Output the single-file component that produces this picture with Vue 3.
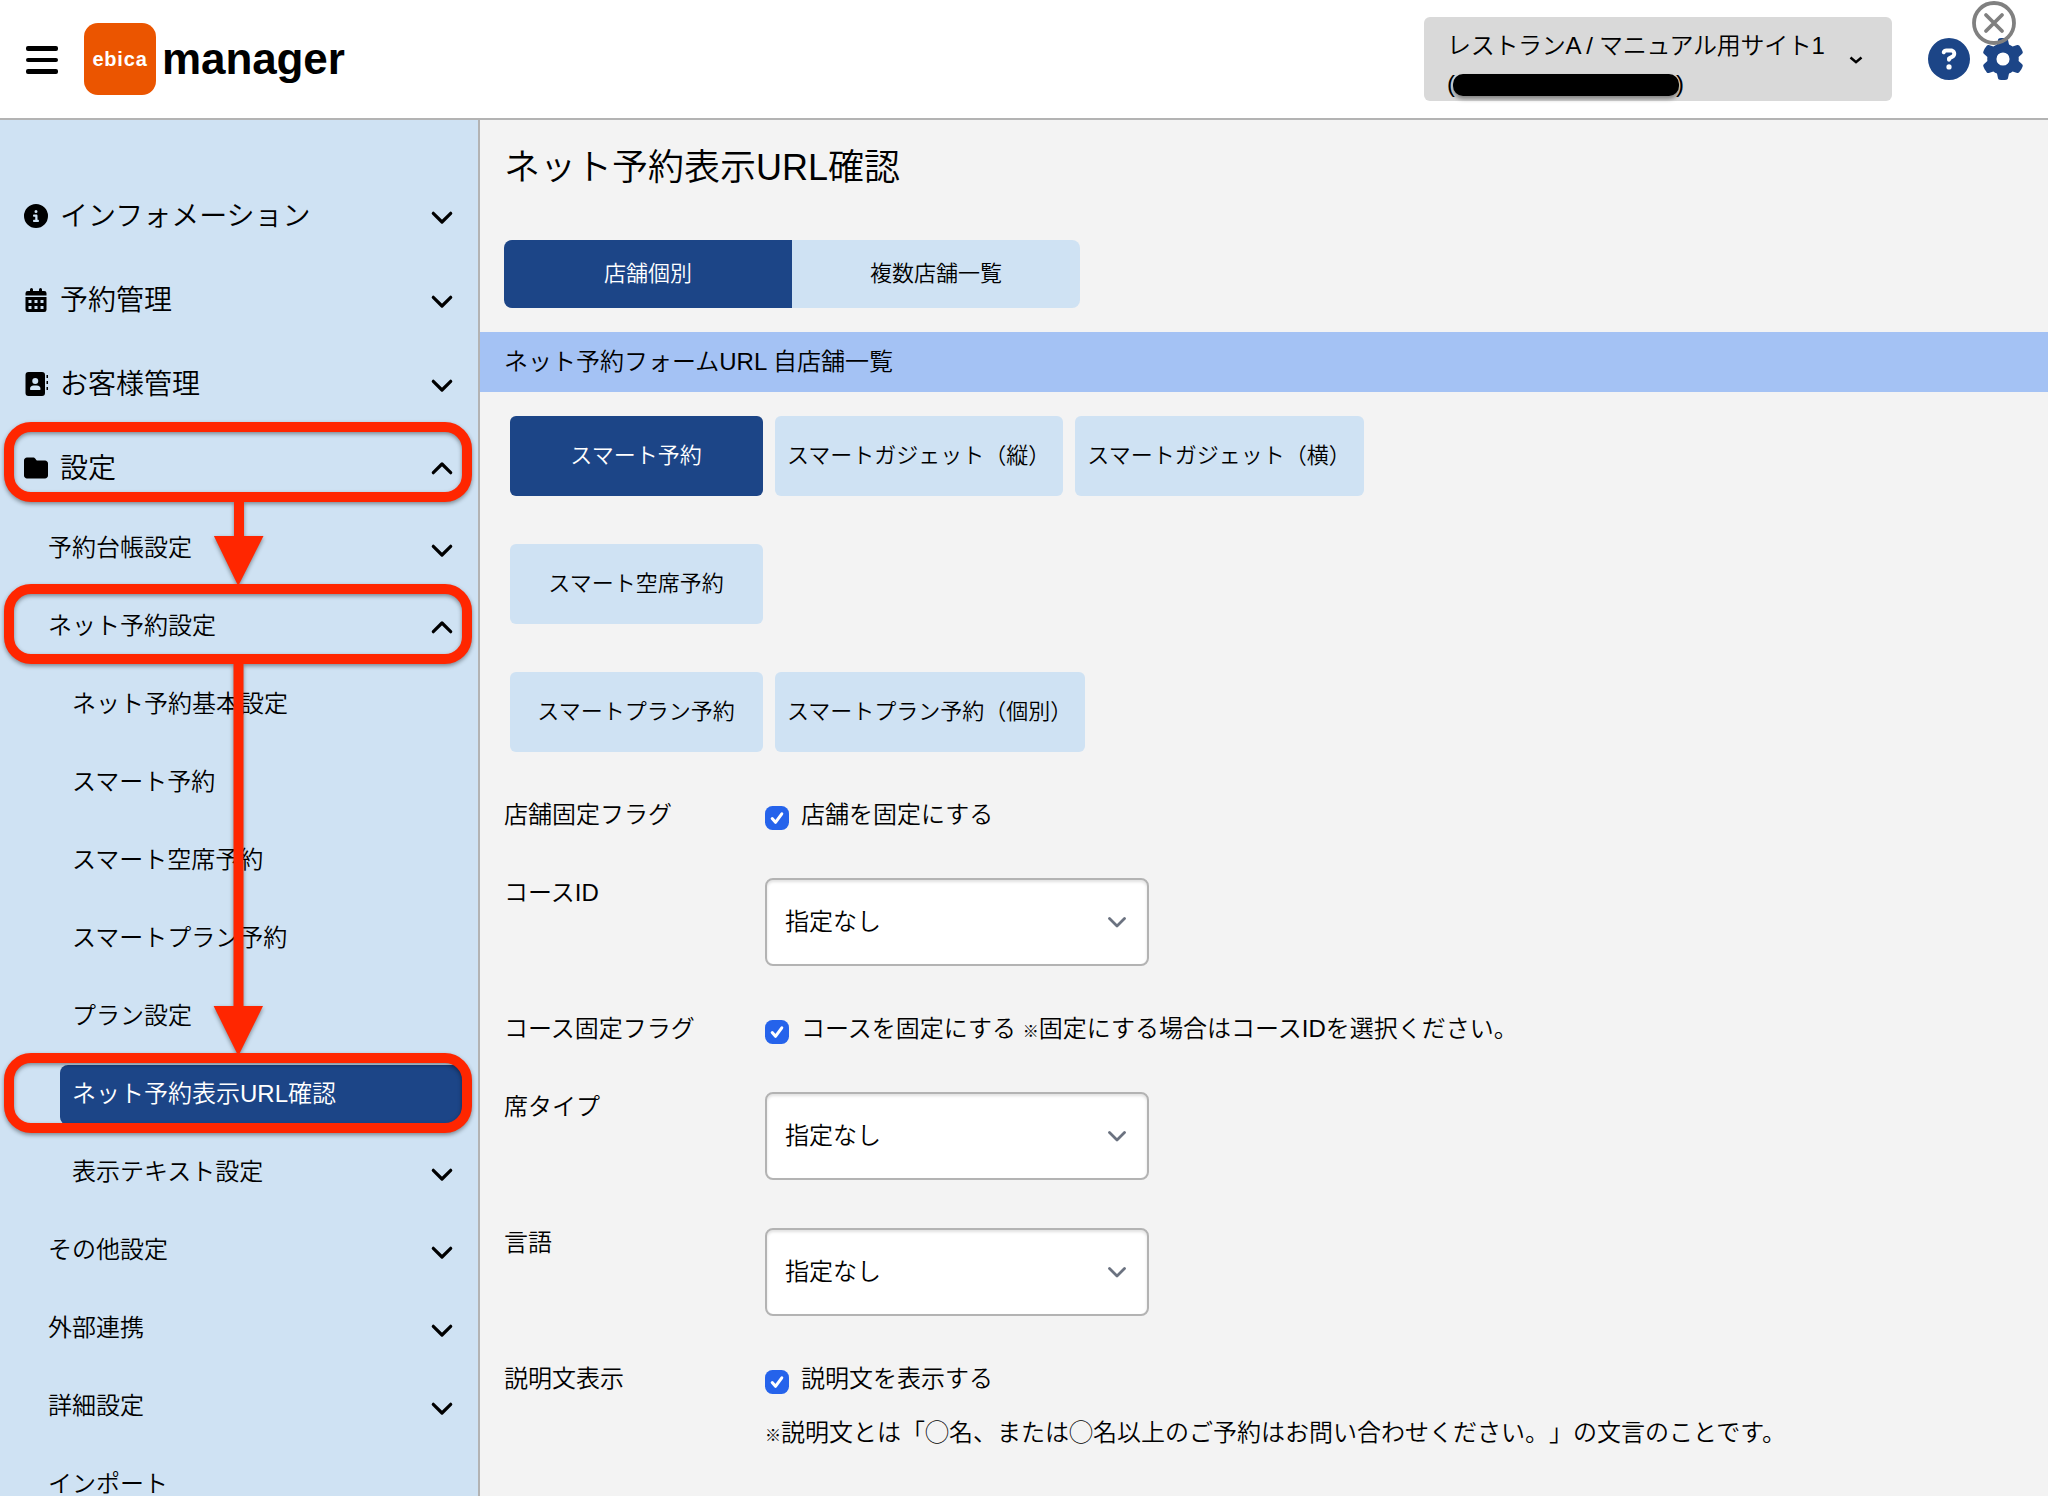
<template>
  <div class="page">
    <header class="header">
      <button
        class="icon-button menu-toggle"
        aria-label="メニュー"
      >
        <span />
        <span />
        <span />
      </button>
      <div class="logo">ebica</div>
      <p class="brand">manager</p>

      <div class="site">
        <div class="site-name">
          <p>レストランA / マニュアル用サイト1</p>
          <p class="site-code">(<span class="site-mask" />)</p>
        </div>
        <svg
          class="site-arrow"
          viewBox="0 0 14 8"
        >
          <path d="M1.5 1.5 7 6.2l5.500-4.700" />
        </svg>
      </div>

      <svg
        class="header-icon"
        viewBox="0 0 512 512"
      >
        <path :d="icons.question" />
      </svg>
      <div class="settings">
        <svg
          class="header-icon"
          viewBox="0 0 512 512"
        >
          <path :d="icons.gear" />
        </svg>
        <svg
          class="close"
          viewBox="0 0 44 44"
        >
          <circle
            cx="22"
            cy="22"
            r="20"
          />
          <path d="M14 14 30 30M30 14 14 30" />
        </svg>
      </div>
    </header>

    <div class="body">
      <nav class="sidebar">
        <ul class="nav-list">
          <li
            v-for="item in menu"
            :key="item.label"
            class="nav-item"
            :class="[`level-${item.level}`, { active: item.active }]"
          >
            <svg
              v-if="item.icon"
              class="nav-icon"
              viewBox="0 0 512 512"
            >
              <path
                fill-rule="evenodd"
                :d="icons[item.icon]"
              />
            </svg>
            <p>{{ item.label }}</p>
            <svg
              v-if="item.arrow"
              class="nav-arrow"
              :class="{ opened: item.arrow === 'up' }"
              viewBox="0 0 22 14"
            >
              <path d="M2.300 2.300 11 11l8.700-8.700" />
            </svg>
          </li>
        </ul>

        <!-- Route through the menu: frames and arrows above the items -->
        <svg
          class="guide"
          viewBox="0 0 478 1376"
        >
          <rect
            v-for="y in [307, 469, 938]"
            :key="y"
            x="9"
            :y="y"
            width="458"
            height="70"
            rx="22"
          />
          <path
            class="guide-arrow"
            d="M234 382h10v34h19.500l-25.300 50-24.300-50h20.100z"
          />
          <path
            class="guide-arrow"
            d="M233.500 542h10v344h19.500l-24.700 50-24.700-50h19.900z"
          />
        </svg>
      </nav>

      <main class="content">
        <h1>ネット予約表示URL確認</h1>

        <div class="tabs">
          <button
            v-for="tab, idx in tabs"
            :key="tab"
            class="tab"
            :class="{ active: idx === activeTab }"
            @click="activeTab = idx"
          >
            {{ tab }}
          </button>
        </div>

        <h2>ネット予約フォームURL 自店舗一覧</h2>

        <div class="types">
          <div
            v-for="row, idx in types"
            :key="idx"
            class="types-row"
          >
            <button
              v-for="type in row"
              :key="type"
              class="type"
              :class="{ active: type === activeType }"
              @click="activeType = type"
            >
              {{ type }}
            </button>
          </div>
        </div>

        <dl class="form">
          <template
            v-for="field in fields"
            :key="field.label"
          >
            <dt>{{ field.label }}</dt>
            <dd>
              <div
                v-if="field.check"
                class="check"
              >
                <svg viewBox="0 0 16 16">
                  <rect
                    width="16"
                    height="16"
                    rx="5"
                  />
                  <path d="M4.800 8.400 7 10.900l4.200-5.700" />
                </svg>
                <p>
                  {{ field.check }}
                  <span
                    v-if="field.hint"
                    class="mark"
                  >※</span>{{ field.hint }}
                </p>
              </div>
              <div
                v-else
                class="select"
              >
                <p>指定なし</p>
                <svg viewBox="0 0 18 11">
                  <path d="M1.500 1.500 9 9l7.500-7.500" />
                </svg>
              </div>
              <p
                v-if="field.note"
                class="note"
              >
                <span class="mark">※</span>{{ field.note }}
              </p>
            </dd>
          </template>
        </dl>
      </main>
    </div>
  </div>
</template>

<script setup>
  import { ref } from 'vue';

  const activeTab = ref(0);
  const activeType = ref('スマート予約');

  const tabs = ['店舗個別', '複数店舗一覧'];

  const types = [
    ['スマート予約', 'スマートガジェット（縦）', 'スマートガジェット（横）'],
    ['スマート空席予約'],
    ['スマートプラン予約', 'スマートプラン予約（個別）']
  ];

  const menu = [
    { level: 1, label: 'インフォメーション', icon: 'info', arrow: 'down' },
    { level: 1, label: '予約管理', icon: 'calendar', arrow: 'down' },
    { level: 1, label: 'お客様管理', icon: 'contacts', arrow: 'down' },
    { level: 1, label: '設定', icon: 'folder', arrow: 'up' },
    { level: 2, label: '予約台帳設定', arrow: 'down' },
    { level: 2, label: 'ネット予約設定', arrow: 'up' },
    { level: 3, label: 'ネット予約基本設定' },
    { level: 3, label: 'スマート予約' },
    { level: 3, label: 'スマート空席予約' },
    { level: 3, label: 'スマートプラン予約' },
    { level: 3, label: 'プラン設定' },
    { level: 3, label: 'ネット予約表示URL確認', active: true },
    { level: 3, label: '表示テキスト設定', arrow: 'down' },
    { level: 2, label: 'その他設定', arrow: 'down' },
    { level: 2, label: '外部連携', arrow: 'down' },
    { level: 2, label: '詳細設定', arrow: 'down' },
    { level: 2, label: 'インポート' }
  ];

  const fields = [
    { label: '店舗固定フラグ', check: '店舗を固定にする' },
    { label: 'コースID' },
    {
      label: 'コース固定フラグ',
      check: 'コースを固定にする',
      hint: '固定にする場合はコースIDを選択ください。'
    },
    { label: '席タイプ' },
    { label: '言語' },
    {
      label: '説明文表示',
      check: '説明文を表示する',
      note: '説明文とは「◯名、または◯名以上のご予約はお問い合わせください。」の文言のことです。'
    }
  ];

  const icons = {
    question: 'M256 512A256 256 0 1 0 256 0a256 256 0 1 0 0 512zM169.800 165.300c7.900-22.300 29.100-37.300 52.800-37.300h58.300c34.900 0 63.100 28.300 63.100 63.100c0 22.600-12.100 43.500-31.700 54.800L280 264.400c-.2 13-10.900 23.600-24 23.600c-13.300 0-24-10.700-24-24V250.500c0-8.600 4.600-16.500 12.100-20.800l44.300-25.400c4.700-2.700 7.600-7.700 7.600-13.100c0-8.400-6.800-15.100-15.100-15.100H222.600c-3.400 0-6.400 2.100-7.500 5.300l-.4 1.200c-4.400 12.500-18.200 19-30.600 14.600s-19-18.200-14.600-30.600l.4-1.200zM224 352a32 32 0 1 1 64 0 32 32 0 1 1 -64 0z',
    gear: 'M495.900 166.600c3.200 8.700 .5 18.400-6.400 24.600l-43.300 39.400c1.100 8.300 1.700 16.800 1.700 25.400s-.6 17.100-1.700 25.400l43.300 39.400c6.900 6.200 9.600 15.900 6.400 24.600c-4.400 11.900-9.700 23.300-15.800 34.300l-4.700 8.100c-6.600 11-14 21.400-22.100 31.200c-5.900 7.200-15.700 9.600-24.500 6.800l-55.700-17.700c-13.400 10.300-28.200 18.900-44 25.400l-12.500 57.100c-2 9.100-9 16.300-18.200 17.800c-13.800 2.300-28 3.500-42.500 3.500s-28.700-1.200-42.500-3.500c-9.200-1.500-16.200-8.700-18.200-17.800l-12.500-57.100c-15.800-6.500-30.600-15.100-44-25.400L83.100 425.900c-8.800 2.800-18.600 .3-24.500-6.800c-8.100-9.800-15.500-20.200-22.100-31.200l-4.700-8.100c-6.100-11-11.400-22.400-15.800-34.300c-3.200-8.700-.5-18.400 6.400-24.600l43.300-39.400C64.600 273.100 64 264.600 64 256s.6-17.100 1.700-25.400L22.400 191.200c-6.900-6.200-9.600-15.900-6.400-24.600c4.400-11.900 9.700-23.300 15.800-34.300l4.700-8.100c6.600-11 14-21.400 22.100-31.200c5.900-7.200 15.700-9.600 24.500-6.800l55.700 17.700c13.400-10.300 28.200-18.900 44-25.400l12.500-57.100c2-9.100 9-16.300 18.200-17.800C227.300 1.200 241.500 0 256 0s28.700 1.200 42.500 3.500c9.200 1.500 16.200 8.700 18.200 17.800l12.500 57.100c15.800 6.500 30.600 15.100 44 25.400l55.700-17.700c8.800-2.800 18.600-.3 24.500 6.800c8.100 9.800 15.500 20.200 22.100 31.200l4.700 8.100c6.100 11 11.400 22.400 15.800 34.300zM256 336a80 80 0 1 0 0-160 80 80 0 1 0 0 160z',
    info: 'M256 512A256 256 0 1 0 256 0a256 256 0 1 0 0 512zM216 336h24V272H216c-13.300 0-24-10.700-24-24s10.700-24 24-24h48c13.300 0 24 10.700 24 24v88h8c13.300 0 24 10.700 24 24s-10.700 24-24 24H216c-13.300 0-24-10.700-24-24s10.700-24 24-24zm40-208a32 32 0 1 1 0 64 32 32 0 1 1 0-64z',
    calendar: 'M160 0a32 32 0 0 1 32 32v32h128V32a32 32 0 0 1 64 0v32h48a48 48 0 0 1 48 48v48H32v-48a48 48 0 0 1 48-48h48V32a32 32 0 0 1 32-32zM32 192h448v272a48 48 0 0 1-48 48H80a48 48 0 0 1-48-48zM96 256v64h64v-64zM224 256v64h64v-64zM352 256v64h64v-64zM96 384v64h64v-64zM224 384v64h64v-64zM352 384v64h64v-64z',
    contacts: 'M96 0h288a64 64 0 0 1 64 64v384a64 64 0 0 1-64 64H96a64 64 0 0 1-64-64V64A64 64 0 0 1 96 0zM240 256a64 64 0 1 0 0-128 64 64 0 0 0 0 128zM208 288a80 80 0 0 0-80 80a16 16 0 0 0 16 16h192a16 16 0 0 0 16-16a80 80 0 0 0-80-80zM480 64h32v64h-32zM480 192h32v64h-32zM480 320h32v64h-32z',
    folder: 'M64 480H448c35.300 0 64-28.700 64-64V160c0-35.300-28.700-64-64-64H288c-10.100 0-19.600-4.700-25.600-12.800L243.200 57.600C231.100 41.500 212.100 32 192 32H64C28.700 32 0 60.700 0 96V416c0 35.300 28.700 64 64 64z'
  };
</script>

<style>
body {
  overflow: hidden;
}
</style>

<style scoped>
.page {
  --navy: #1c4587;
  --pale: #cfe2f3;
  --line: #b3b3b3;

  display: flex;
  flex-direction: column;
  height: 1496px;
  overflow: hidden;
  background-color: #f3f3f3;
  color: #000;
  font-family: "Liberation Sans", "Noto Sans CJK JP", sans-serif;
  font-size: 24px;
  font-weight: 350;
  line-height: 30px;
  text-spacing-trim: space-all;
  white-space: nowrap;
}

p, h1, h2, ul, dl, dd {
  margin: 0;
  padding: 0;
  font-weight: inherit;
}

button {
  padding: 0;
  border: 0;
  background: none;
  color: inherit;
  font: inherit;
}

.header {
  display: flex;
  flex: none;
  align-items: center;
  box-sizing: border-box;
  height: 120px;
  padding: 0 25px 0 26px;
  border-bottom: 2px solid var(--line);
  background-color: #fff;
}

.menu-toggle {
  display: flex;
  flex-direction: column;
  gap: 7px;
  width: 32px;
  margin: 2px 26px 0 0;
}

.menu-toggle span {
  height: 4.500px;
  border-radius: 2px;
  background-color: #000;
}

.logo {
  width: 72px;
  height: 72px;
  border-radius: 14px;
  background-color: #eb5500;
  color: #fff;
  font-size: 20px;
  font-weight: 700;
  letter-spacing: 0.8px;
  line-height: 73px;
  text-align: center;
}

.brand {
  margin-left: 6px;
  font-size: 44px;
  font-weight: 700;
  letter-spacing: -0.1px;
}

.site {
  display: flex;
  align-items: center;
  box-sizing: border-box;
  width: 468px;
  height: 84px;
  margin-left: auto;
  padding: 0 29px 0 23px;
  border-radius: 6px;
  background-color: #d9d9d9;
  line-height: 38px;
}

.site-name {
  flex: 1;
  margin-top: 12px;
  letter-spacing: -0.3px;
}

.site-code {
  display: flex;
  letter-spacing: 0;
}

.site-mask {
  width: 226px;
  height: 22px;
  margin: 9px -3px 0 -2px;
  border-radius: 10px;
  background-color: #000;
  box-shadow: 0 3px 4px rgba(0, 0, 0, 0.4);
}

.site-arrow {
  width: 14px;
  height: 8px;
  margin-top: 2px;
  fill: none;
  stroke: #000;
  stroke-width: 2.500;
}

.header-icon {
  display: block;
  width: 42px;
  height: 42px;
  fill: var(--navy);
}

.site + .header-icon {
  margin: 0 12px 0 36px;
}

.settings {
  position: relative;
  margin-right: -1px;
}

.close {
  position: absolute;
  top: -37px;
  left: -10px;
  width: 44px;
  height: 44px;
  fill: none;
  stroke: #808080;
  stroke-width: 3.800;
  stroke-linecap: round;
}

.body {
  display: flex;
  flex: 1;
  min-height: 0;
}

.sidebar {
  position: relative;
  box-sizing: border-box;
  width: 480px;
  border-right: 2px solid var(--line);
  background-color: var(--pale);
}

.nav-list {
  display: flex;
  flex-direction: column;
  gap: 18px;
  padding-top: 63px;
  list-style: none;
}

.nav-item {
  display: flex;
  flex: none;
  align-items: center;
  height: 60px;
  margin-right: 12px;
  padding-right: 13px;
  border-radius: 8px;
}

.nav-item p {
  margin-bottom: 2px;
}

.nav-item.level-1 {
  height: 66px;
  padding-left: 24px;
  font-size: 28px;
}

.nav-item.level-1 p {
  margin: 1px 0 0;
}

.nav-item.level-2 {
  padding-left: 48px;
}

.nav-item.level-3 {
  margin-left: 60px;
  padding-left: 12px;
}

.nav-item.active {
  background-color: var(--navy);
  color: #fff;
}

.nav-icon {
  width: 24px;
  height: 24px;
  margin-right: 12px;
}

.nav-arrow {
  width: 22px;
  height: 14px;
  margin: 4px 0 0 auto;
  fill: none;
  stroke: #000;
  stroke-width: 3.200;
  stroke-linecap: round;
  stroke-linejoin: round;
}

.nav-arrow.opened {
  margin-top: 0;
  transform: rotate(180deg);
}

.guide {
  position: absolute;
  top: 0;
  left: 0;
  width: 478px;
  height: 1376px;
  fill: none;
  stroke: #ff2600;
  stroke-width: 10;
  filter: drop-shadow(0 2px 2px rgba(0, 0, 0, 0.4));
  pointer-events: none;
}

.guide-arrow {
  fill: #ff2600;
  stroke: none;
}

.content {
  flex: 1;
}

h1 {
  padding: 21px 0 0 24px;
  font-size: 36px;
  line-height: 54px;
}

.tabs {
  display: flex;
  width: 576px;
  margin: 45px 0 24px 24px;
  border-radius: 8px;
  overflow: hidden;
}

.tab {
  flex: 1;
  height: 68px;
  background-color: var(--pale);
  font-size: 22px;
}

h2 {
  padding-left: 24px;
  background-color: #a4c2f4;
  font-size: 24px;
  line-height: 60px;
}

.types {
  display: flex;
  flex-direction: column;
  gap: 48px;
  padding: 24px 0 48px 30px;
}

.types-row {
  display: flex;
  gap: 12px;
}

.type {
  min-width: 253px;
  height: 80px;
  padding: 0 13px 0 12px;
  border-radius: 6px;
  background-color: var(--pale);
  font-size: 22px;
}

.tab.active,
.type.active {
  background-color: var(--navy);
  color: #fff;
}

.form {
  display: grid;
  grid-template-columns: 261px 1fr;
  row-gap: 48px;
  padding-left: 24px;
}

.check {
  display: flex;
  gap: 12px;
}

.check svg {
  width: 24px;
  height: 24px;
  margin-top: 6px;
  margin-bottom: -6px;
  fill: #2563eb;
}

.check path {
  fill: none;
  stroke: #fff;
  stroke-width: 2;
  stroke-linecap: round;
  stroke-linejoin: round;
}

.mark {
  font-size: 16px;
  font-weight: 700;
  line-height: 0;
}

.select {
  display: flex;
  align-items: center;
  justify-content: space-between;
  box-sizing: border-box;
  width: 384px;
  height: 88px;
  padding: 0 21px 0 18px;
  border: 2px solid var(--line);
  border-radius: 8px;
  background-color: #fff;
  box-shadow: inset 0 2px 3px rgba(0, 0, 0, 0.12);
}

.select p {
  margin-bottom: 1px;
}

.select svg {
  width: 18px;
  height: 11px;
  fill: none;
  stroke: #6b7280;
  stroke-width: 2.800;
  stroke-linecap: round;
  stroke-linejoin: round;
}

.note {
  margin-top: 24px;
}
</style>
